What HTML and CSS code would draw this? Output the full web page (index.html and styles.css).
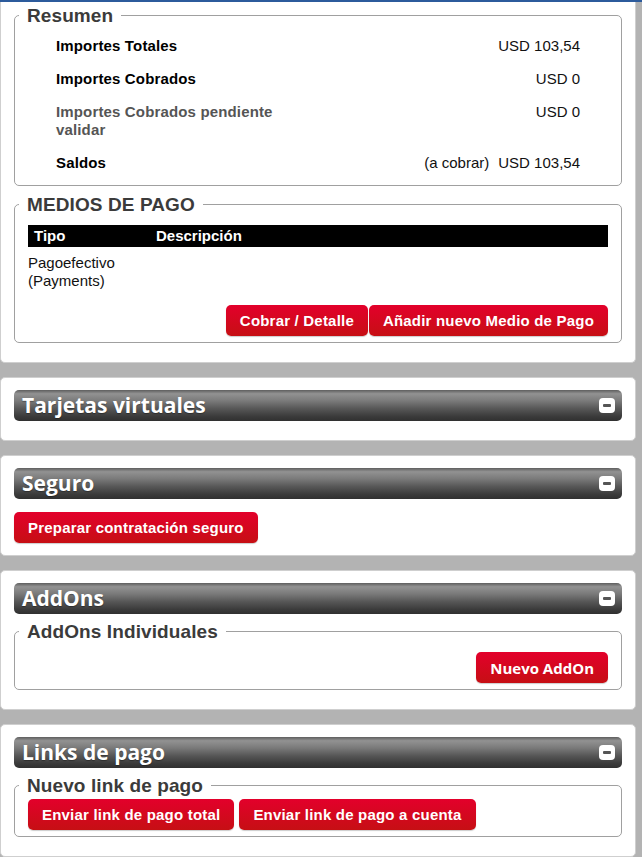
FILE: index.html
```html
<!DOCTYPE html>
<html lang="es">
<head>
<meta charset="utf-8">
<title>Resumen</title>
<link rel="stylesheet" href="styles.css">
</head>
<body>
<div class="topline"></div>

<div class="panel panel-cut">
  <fieldset class="box box-summary">
    <legend>Resumen</legend>
    <div class="srow"><span class="slabel">Importes Totales</span><span class="sval">USD 103,54</span></div>
    <div class="srow"><span class="slabel">Importes Cobrados</span><span class="sval">USD 0</span></div>
    <div class="srow"><span class="slabel slabel-muted">Importes Cobrados pendiente validar</span><span class="sval">USD 0</span></div>
    <div class="srow"><span class="slabel">Saldos</span><span class="sval"><span class="snote">(a cobrar)</span>USD 103,54</span></div>
  </fieldset>

  <fieldset class="box box-upper">
    <legend>MEDIOS DE PAGO</legend>
    <table class="pay-table">
      <colgroup><col class="col-tipo"><col></colgroup>
      <thead>
        <tr><th>Tipo</th><th>Descripción</th></tr>
      </thead>
      <tbody>
        <tr><td>Pagoefectivo (Payments)</td><td></td></tr>
      </tbody>
    </table>
    <div class="actions actions-pay">
      <button class="btn">Cobrar / Detalle</button>
      <button class="btn">Añadir nuevo Medio de Pago</button>
    </div>
  </fieldset>
</div>

<div class="panel">
  <div class="bar"><h2>Tarjetas virtuales</h2><span class="minus"></span></div>
</div>

<div class="panel">
  <div class="bar"><h2>Seguro</h2><span class="minus"></span></div>
  <button class="btn btn-solo">Preparar contratación seguro</button>
</div>

<div class="panel">
  <div class="bar"><h2>AddOns</h2><span class="minus"></span></div>
  <fieldset class="box">
    <legend>AddOns Individuales</legend>
    <div class="actions">
      <button class="btn btn-alt">Nuevo AddOn</button>
    </div>
  </fieldset>
</div>

<div class="panel">
  <div class="bar"><h2>Links de pago</h2><span class="minus"></span></div>
  <fieldset class="box box-tight">
    <legend>Nuevo link de pago</legend>
    <div class="actions actions-start">
      <button class="btn">Enviar link de pago total</button>
      <button class="btn">Enviar link de pago a cuenta</button>
    </div>
  </fieldset>
</div>
</body>
</html>
```

FILE: styles.css
```css
* { box-sizing: border-box; }

body {
  margin: 0;
  background: #b3b3b3;
  font-family: "Liberation Sans", Arial, sans-serif;
  color: #111;
}

.topline {
  height: 2px;
  background: #2c5b9c;
}

.panel {
  background: #fff;
  border: 1px solid #cfcfcf;
  border-radius: 5px;
  margin: 0 6px 14px 0;
  padding: 12px 13px 12px;
}

.panel-cut {
  border-top: none;
  border-radius: 0 0 5px 5px;
  padding-top: 3px;
}

/* fieldsets */
.box {
  margin: 0 0 7px;
  padding: 10px 13px 6px;
  border: 1px solid #a0a0a0;
  border-radius: 5px;
  min-inline-size: 0;
}

.box legend {
  margin-left: -9px;
  padding: 0 8px;
  font-size: 19px;
  line-height: 21px;
  letter-spacing: 0.1px;
  font-weight: 700;
  color: #3b3b3b;
}

.box-summary {
  padding-top: 3px;
  margin-bottom: 8px;
}

.box-tight {
  padding-top: 3px;
}

/* summary rows */
.srow {
  display: flex;
  justify-content: space-between;
  align-items: flex-start;
  padding: 7.5px 28px;
  font-size: 15px;
  line-height: 18px;
}

.slabel {
  width: 240px;
  font-weight: 700;
  color: #000;
  letter-spacing: 0.15px;
}

.slabel-muted {
  color: #555;
}

.sval {
  display: flex;
  gap: 9px;
  color: #111;
}

/* table */
.pay-table {
  width: 100%;
  border-collapse: collapse;
  table-layout: fixed;
  font-size: 15px;
}

.col-tipo { width: 122px; }

.pay-table th {
  background: #000;
  color: #fff;
  text-align: left;
  font-weight: 700;
  height: 22px;
  padding: 0 6px;
  line-height: 22px;
}

.pay-table td {
  padding: 7px 0 0;
  line-height: 18px;
  vertical-align: top;
  color: #111;
}

/* actions and buttons */
.actions {
  display: flex;
  justify-content: flex-end;
  gap: 1px;
}

.actions-pay {
  margin-top: 15px;
}

.actions-start {
  justify-content: flex-start;
  gap: 5px;
}

.btn {
  height: 31px;
  padding: 0 14px;
  border: none;
  border-radius: 5px;
  background: linear-gradient(#e3002b, #c60f14);
  color: #fff;
  font-family: "Liberation Sans", Arial, sans-serif;
  font-size: 15px;
  letter-spacing: 0.2px;
  font-weight: 700;
  box-shadow: 0 1px 1px rgba(0, 0, 0, 0.2);
  cursor: pointer;
}

.btn-alt {
  font-family: "Open Sans", sans-serif;
  font-size: 15px;
  letter-spacing: 0;
  padding: 0 14px;
}

.btn-solo {
  display: block;
  margin-top: 13px;
}

/* header bars */
.bar {
  height: 31px;
  border-radius: 5px;
  background: linear-gradient(#5e5e5e 0%, #929292 12%, #7a7a7a 35%, #575757 60%, #3b3b3b 85%, #303030 100%);
  display: flex;
  align-items: center;
  justify-content: space-between;
  padding: 0 7px 0 8px;
  margin-bottom: 7px;
}

.bar h2 {
  margin: 0;
  font-family: "Open Sans", sans-serif;
  font-size: 21px;
  font-weight: 700;
  line-height: 31px;
  color: #fff;
  text-shadow: 0 1px 1px rgba(0, 0, 0, 0.35);
}

.minus {
  width: 16px;
  height: 15px;
  background: #fff;
  border-radius: 4px;
  display: flex;
  align-items: center;
  justify-content: center;
}

.minus::before {
  content: "";
  width: 8px;
  height: 3px;
  background: #555;
  border-radius: 1px;
}
```
